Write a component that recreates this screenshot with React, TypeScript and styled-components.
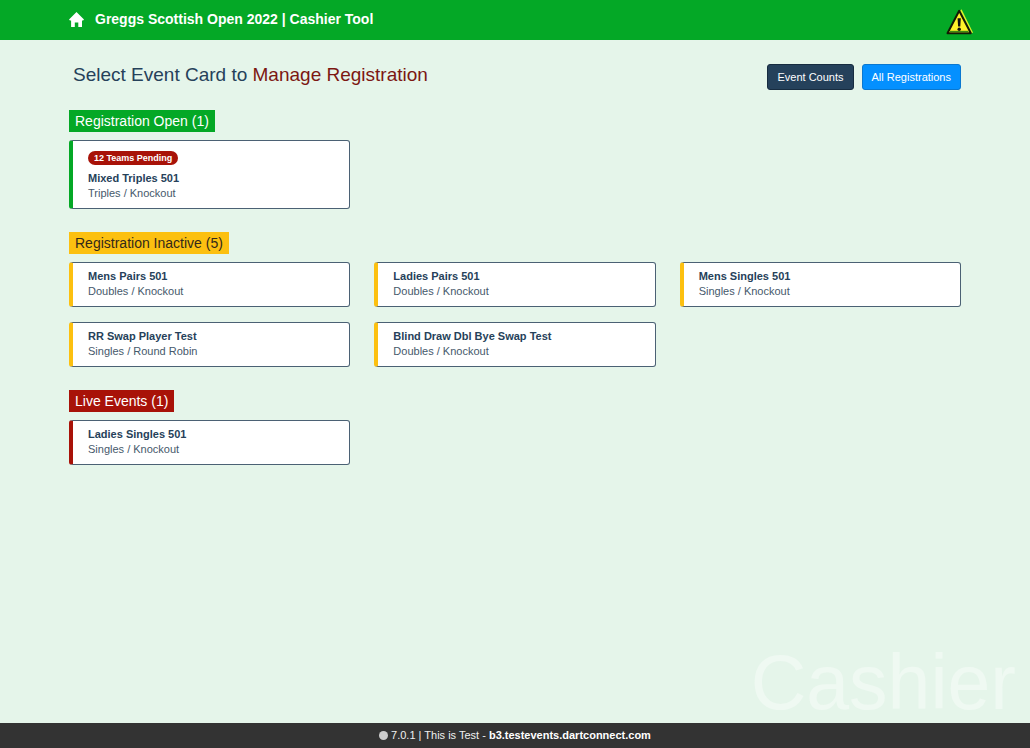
import React from "react";
import styled, { createGlobalStyle } from "styled-components";

const GlobalStyle = createGlobalStyle`
  *, *::before, *::after { box-sizing: border-box; }
  body {
    margin: 0;
    background: #e5f5ea;
    color: #26415a;
    font-family: "Liberation Sans", Arial, Helvetica, sans-serif;
    font-size: 11px;
    line-height: 15px;
  }
`;

const Page = styled.div`
  position: relative;
  display: flex;
  flex-direction: column;
  min-height: 100vh;
`;

const Header = styled.header`
  display: flex;
  align-items: center;
  justify-content: space-between;
  height: 40px;
  padding: 0 57px 2px 69px;
  background: #04a826;
  color: #fff;
`;

const Brand = styled.a`
  display: flex;
  align-items: center;
  gap: 11px;
  color: inherit;
  font-size: 14px;
  font-weight: 700;
  line-height: 18px;
  text-decoration: none;
`;

const AlertButton = styled.button`
  display: flex;
  margin: 6px 0 0;
  padding: 0;
  border: 0;
  background: none;
  cursor: pointer;
`;

const Main = styled.main`
  flex: 1;
  padding: 24px 69px;
`;

const TitleRow = styled.div`
  display: flex;
  align-items: center;
  justify-content: space-between;
  margin-bottom: 20px;
`;

const Title = styled.h1`
  margin: 0;
  padding: 0 0 4px 4px;
  font-size: 19px;
  font-weight: 400;
  line-height: 22px;
`;

const Accent = styled.span`
  color: #7c1712;
`;

const Actions = styled.div`
  display: flex;
  gap: 8px;
`;

const ActionButton = styled.button<{ $primary?: boolean }>`
  height: 26px;
  padding: 0 9px;
  border: 1px solid ${(p) => (p.$primary ? "#0a78d0" : "#172c40")};
  border-radius: 3px;
  background: ${(p) => (p.$primary ? "#0490ff" : "#25415b")};
  color: #fff;
  font-family: inherit;
  font-size: 11px;
  cursor: pointer;
`;

const Section = styled.section`
  margin-bottom: 23px;
`;

const SectionLabel = styled.h2<{ $color: string; $dark?: boolean }>`
  width: fit-content;
  margin: 0 0 8px;
  padding: 0 6px;
  background: ${(p) => p.$color};
  color: ${(p) => (p.$dark ? "#33291a" : "#fff")};
  font-size: 14px;
  font-weight: 400;
  line-height: 22px;
`;

const CardGrid = styled.div`
  display: grid;
  grid-template-columns: repeat(3, 1fr);
  gap: 15px 24px;
`;

const Card = styled.a<{ $color: string }>`
  display: block;
  padding: 6px 15px 7px;
  border: 1px solid #4b6174;
  border-left: 4px solid ${(p) => p.$color};
  border-radius: 3px;
  background: #fff;
  color: #46596b;
  text-decoration: none;
`;

const Badge = styled.span`
  display: block;
  width: fit-content;
  margin: 4px 0 6px;
  padding: 0 6px;
  border-radius: 8px;
  background: #a81208;
  color: #fff;
  font-size: 9px;
  font-weight: 700;
  line-height: 14px;
`;

const CardTitle = styled.strong`
  display: block;
  color: #26415a;
`;

const Watermark = styled.div`
  position: absolute;
  right: 14px;
  bottom: 22px;
  color: #eff9f2;
  font-size: 77px;
  line-height: 88px;
  pointer-events: none;
`;

const Footer = styled.footer`
  display: flex;
  align-items: center;
  justify-content: center;
  height: 25px;
  background: #333;
  color: #f0f0f0;
`;

const StatusDot = styled.span`
  width: 9px;
  height: 9px;
  margin-right: 3px;
  border-radius: 50%;
  background: #ccc;
`;

const Host = styled.strong`
  color: #fff;
`;

interface EventItem {
  name: string;
  format: string;
  pending?: string;
}

interface EventGroup {
  label: string;
  color: string;
  dark?: boolean;
  events: EventItem[];
}

const groups: EventGroup[] = [
  {
    label: "Registration Open",
    color: "#04a826",
    events: [{ name: "Mixed Triples 501", format: "Triples / Knockout", pending: "12 Teams Pending" }],
  },
  {
    label: "Registration Inactive",
    color: "#fcc010",
    dark: true,
    events: [
      { name: "Mens Pairs 501", format: "Doubles / Knockout" },
      { name: "Ladies Pairs 501", format: "Doubles / Knockout" },
      { name: "Mens Singles 501", format: "Singles / Knockout" },
      { name: "RR Swap Player Test", format: "Singles / Round Robin" },
      { name: "Blind Draw Dbl Bye Swap Test", format: "Doubles / Knockout" },
    ],
  },
  {
    label: "Live Events",
    color: "#a81208",
    events: [{ name: "Ladies Singles 501", format: "Singles / Knockout" }],
  },
];

const HomeIcon = () => (
  <svg width="15" height="15" viewBox="0 0 15 15" fill="#fff" aria-hidden="true">
    <path d="M7.5 0 15 7.6l-.9.9H13V15H9.3v-4.6H5.8V15H2.1V8.500H.9L0 7.600Z" />
  </svg>
);

const WarningIcon = () => (
  <svg width="27" height="26" viewBox="0 0 27 26" aria-hidden="true">
    <path d="M15.500 .2 27 23.500 24.500 25 13 3Z" fill="#d8f32a" />
    <path d="M13.200 1.800 24.900 24.200H1.500Z" fill="#fff22a" stroke="#141a05" strokeWidth="2" strokeLinejoin="round" />
    <path d="M4 21.800h18.500v1.500H4z" fill="#3d8b12" />
    <path d="M11.600 9.200h3.200l-.5 8.300h-2.200z" fill="#111" />
    <circle cx="13.200" cy="20.300" r="1.700" fill="#111" />
  </svg>
);

export default function App() {
  return (
    <>
      <GlobalStyle />
      <Page>
        <Header>
          <Brand href="#">
            <HomeIcon />
            Greggs Scottish Open 2022 | Cashier Tool
          </Brand>
          <AlertButton type="button" aria-label="Alerts">
            <WarningIcon />
          </AlertButton>
        </Header>
        <Main>
          <TitleRow>
            <Title>
              Select Event Card to <Accent>Manage Registration</Accent>
            </Title>
            <Actions>
              <ActionButton type="button">Event Counts</ActionButton>
              <ActionButton type="button" $primary>
                All Registrations
              </ActionButton>
            </Actions>
          </TitleRow>
          {groups.map((group) => (
            <Section key={group.label}>
              <SectionLabel $color={group.color} $dark={group.dark}>
                {`${group.label} (${group.events.length})`}
              </SectionLabel>
              <CardGrid>
                {group.events.map((event) => (
                  <Card key={event.name} href="#" $color={group.color}>
                    {event.pending && <Badge>{event.pending}</Badge>}
                    <CardTitle>{event.name}</CardTitle>
                    {event.format}
                  </Card>
                ))}
              </CardGrid>
            </Section>
          ))}
        </Main>
        <Watermark>Cashier</Watermark>
        <Footer>
          <StatusDot />
          <span>
            7.0.1 | This is Test - <Host>b3.testevents.dartconnect.com</Host>
          </span>
        </Footer>
      </Page>
    </>
  );
}
